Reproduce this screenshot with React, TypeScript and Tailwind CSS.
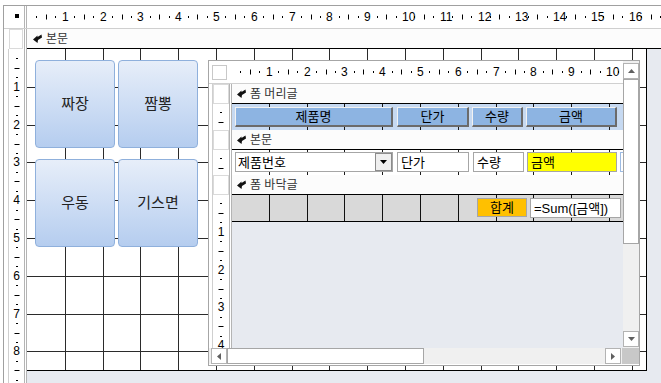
import React from "react";

// Access form design view: outer form with 4 menu buttons and an embedded subform.

const CM = 37.8;
const Q = CM / 4;

function HRuler({ origin, limit }: { origin: number; limit: number }) {
  const marks: React.ReactNode[] = [];
  for (let i = 1; origin + i * Q < limit; i++) {
    const x = Math.round(origin + i * Q);
    if (i % 4 === 0) {
      marks.push(
        <span key={i} className="absolute top-1/2 -translate-y-1/2 text-[12px] leading-none text-black" style={{ left: x - 3 }}>
          {i / 4}
        </span>
      );
    } else {
      marks.push(
        <span
          key={i}
          className={`absolute top-1/2 -translate-y-1/2 w-px bg-black ${i % 2 === 0 ? "h-[5px]" : "h-[2px]"}`}
          style={{ left: x }}
        />
      );
    }
  }
  return <div className="relative h-full flex-1 overflow-hidden bg-white">{marks}</div>;
}

function VRuler({ origin, limit }: { origin: number; limit: number }) {
  const marks: React.ReactNode[] = [];
  for (let i = 1; origin + i * Q < limit; i++) {
    const y = Math.round(origin + i * Q);
    if (i % 4 === 0) {
      marks.push(
        <span key={i} className="absolute left-1/2 -translate-x-1/2 -translate-y-1/2 text-[12px] leading-none text-black" style={{ top: y }}>
          {i / 4}
        </span>
      );
    } else {
      marks.push(
        <span
          key={i}
          className={`absolute left-1/2 -translate-x-1/2 h-px bg-black ${i % 2 === 0 ? "w-[5px]" : "w-[2px]"}`}
          style={{ top: y }}
        />
      );
    }
  }
  return <div className="absolute inset-0 overflow-hidden">{marks}</div>;
}

function Grid({ w, h, ox = 0, color = "#2b2b2b", rows = true }: { w: number; h: number; ox?: number; color?: string; rows?: boolean }) {
  const xs: number[] = [];
  const ys: number[] = [];
  for (let n = 1; Math.round(n * CM) + ox < w; n++) xs.push(Math.round(n * CM) + ox);
  if (rows) for (let n = 1; Math.round(n * CM) < h; n++) ys.push(Math.round(n * CM));
  return (
    <svg className="absolute left-0 top-0" width={w} height={h}>
      {xs.map((x) => (
        <rect key={"x" + x} x={x} y={0} width={1} height={h} fill={color} />
      ))}
      {ys.map((y) => (
        <rect key={"y" + y} x={0} y={y} width={w} height={1} fill={color} />
      ))}
    </svg>
  );
}

function SecIcon() {
  return (
    <svg width="9" height="9" viewBox="0 0 9 9" className="shrink-0">
      <path d="M0 5.5 L4.5 1.5 L4.5 3 L8.5 0.5 L9 3.5 L5 6 L4.5 9 Z" fill="#111" />
    </svg>
  );
}

function SectionBar({ label, className = "" }: { label: string; className?: string }) {
  return (
    <div className={`flex items-center gap-[4px] h-[20px] shrink-0 border-b border-black bg-[#fcfcfc] text-[12px] leading-none text-[#333] ${className}`}>
      <SecIcon />
      <span>{label}</span>
    </div>
  );
}

function MenuButton({ label, className }: { label: string; className: string }) {
  return (
    <div
      className={`absolute w-[80px] h-[88px] rounded-[4px] border border-[#8fb0dc] bg-linear-to-b from-[#e7eef9] to-[#b5cdef] flex items-center justify-center text-[15px] text-[#222] ${className}`}
    >
      {label}
    </div>
  );
}

function HeadLabel({ text, className }: { text: string; className: string }) {
  return (
    <div
      className={`absolute top-[3px] h-[20px] flex items-center justify-center bg-[#8db4e2] border-t border-l border-t-[#f2f2f2] border-l-[#f2f2f2] border-r-2 border-b-2 border-r-[#6b6b6b] border-b-[#6b6b6b] text-[13px] leading-none text-black ${className}`}
    >
      {text}
    </div>
  );
}

function TextBox({ text, className }: { text: string; className: string }) {
  return (
    <div className={`absolute h-[20px] flex items-center pl-[3px] border border-[#a6a6a6] text-[13px] leading-none text-black ${className}`}>
      {text}
    </div>
  );
}

function Tri({ dir }: { dir: "up" | "down" | "left" | "right" }) {
  const pts = {
    up: "0,4 7,4 3.5,0",
    down: "0,0 7,0 3.5,4",
    left: "4,0 4,7 0,3.5",
    right: "0,0 0,7 4,3.5",
  }[dir];
  const vert = dir === "up" || dir === "down";
  return (
    <svg width={vert ? 7 : 4} height={vert ? 4 : 7}>
      <polygon points={pts} fill="#606060" />
    </svg>
  );
}

function ArrowBox({ dir }: { dir: "up" | "down" | "left" | "right" }) {
  return (
    <div className="w-[16px] h-[16px] shrink-0 border border-[#b3b3b3] bg-white flex items-center justify-center">
      <Tri dir={dir} />
    </div>
  );
}

function Subform() {
  return (
    <div className="absolute left-[181px] top-[11px] w-[432px] h-[306px] border border-[#a6a6a6] bg-white flex flex-col">
      <div className="flex h-[287px] shrink-0">
        {/* design area */}
        <div className="w-[414px] shrink-0 flex flex-col">
          <div className="flex h-[23px] shrink-0 border-b border-[#d0d0d0]">
            <div className="ml-[3px] mt-[4px] w-[15px] h-[15px] border border-[#c8c8c8]" />
            <div className="ml-[2px] flex-1 flex">
              <HRuler origin={2} limit={400} />
            </div>
          </div>
          <div className="flex flex-1 min-h-0">
            {/* vertical ruler */}
            <div className="w-[23px] shrink-0 pl-[3px] flex flex-col">
              <div className="flex-1 flex flex-col border-l border-l-[#cfcfcf] border-r-[3px] border-double border-r-[#b4b4b4]">
                <div className="h-[20px] shrink-0 border border-[#dadada]" />
                <div className="relative h-[26px] shrink-0">
                  <VRuler origin={-1} limit={26} />
                </div>
                <div className="h-[20px] shrink-0 border border-[#dadada]" />
                <div className="relative h-[25px] shrink-0">
                  <VRuler origin={-1} limit={25} />
                </div>
                <div className="h-[20px] shrink-0 border border-[#dadada]" />
                <div className="relative flex-1">
                  <VRuler origin={-1} limit={160} />
                </div>
              </div>
            </div>
            {/* sections */}
            <div className="flex-1 min-w-0 flex flex-col overflow-hidden">
              <SectionBar label="폼 머리글" className="pl-[5px]" />
              <div className="relative h-[26px] shrink-0 bg-[#c6d9f1] overflow-hidden">
                <Grid w={391} h={26} ox={-1} color="#1a1a1a" />
                <HeadLabel text="제품명" className="left-[3px] w-[158px]" />
                <HeadLabel text="단가" className="left-[165px] w-[72px]" />
                <HeadLabel text="수량" className="left-[240px] w-[51px]" />
                <HeadLabel text="금액" className="left-[294px] w-[91px]" />
              </div>
              <SectionBar label="본문" className="pl-[5px]" />
              <div className="relative h-[25px] shrink-0 bg-white overflow-hidden">
                <Grid w={391} h={25} ox={-1} color="#1a1a1a" />
                <div className="absolute left-[3px] top-[2px] w-[158px] h-[20px] border border-[#a6a6a6] bg-white flex items-center pl-[2px] text-[13px] leading-none">
                  제품번호
                  <div className="absolute right-0 top-0 bottom-0 w-[17px] border border-[#8c8c8c] bg-[#efefef] flex items-center justify-center">
                    <svg width="7" height="4">
                      <polygon points="0,0 7,0 3.5,4" fill="#000" />
                    </svg>
                  </div>
                </div>
                <TextBox text="단가" className="top-[2px] left-[165px] w-[72px] bg-white" />
                <TextBox text="수량" className="top-[2px] left-[241px] w-[51px] bg-white" />
                <TextBox text="금액" className="top-[2px] left-[295px] w-[90px] bg-[#ffff00]" />
                <div className="absolute left-[388px] top-[2px] w-[10px] h-[20px] border border-[#9dbbe3] bg-white" />
              </div>
              <SectionBar label="폼 바닥글" className="pl-[5px]" />
              <div className="relative h-[27px] shrink-0 bg-[#d9d9d9] border-b border-black overflow-hidden">
                <Grid w={391} h={26} ox={-1} color="#111" />
                <div className="absolute left-[245px] top-[3px] w-[50px] h-[19px] border border-[#a6a6a6] bg-[#ffc000] flex items-center justify-center text-[13px] leading-none">
                  합계
                </div>
                <TextBox text="=Sum([금액])" className="top-[3px] left-[298px] w-[91px] h-[19px] bg-white" />
              </div>
              <div className="flex-1 bg-[#e7eaf0]" />
            </div>
          </div>
        </div>
        {/* vertical scrollbar */}
        <div className="flex-1 flex flex-col bg-[#f0f0f0] pt-[2px] pb-px">
          <ArrowBox dir="up" />
          <div className="h-[165px] shrink-0 border border-[#a6a6a6] bg-white" />
          <div className="flex-1" />
          <ArrowBox dir="down" />
        </div>
      </div>
      {/* horizontal scrollbar */}
      <div className="flex h-[16px] shrink-0">
        <div className="w-[413px] shrink-0 flex bg-[#f0f0f0] pl-[2px] pr-px">
          <ArrowBox dir="left" />
          <div className="w-[197px] shrink-0 border border-[#a6a6a6] bg-white" />
          <div className="flex-1" />
          <ArrowBox dir="right" />
        </div>
        <div className="flex-1 bg-[#c8c8c8]" />
      </div>
    </div>
  );
}

export default function App() {
  return (
    <div className="w-[661px] h-[383px] overflow-hidden bg-white pl-[3px] pt-[5px] flex font-['Liberation_Sans','Noto_Sans_CJK_KR',sans-serif] text-black">
      <div className="flex-1 min-w-0 flex flex-col border-l border-t border-[#a0a0a0]">
        {/* top ruler */}
        <div className="flex h-[23px] shrink-0 border-b border-b-[#cfcfcf]">
          <div className="w-[23px] shrink-0 border-r-[3px] border-double border-r-[#b4b4b4]">
            <div className="ml-[11px] mt-[8px] w-[4px] h-[4px] bg-black" />
          </div>
          <HRuler origin={0} limit={640} />
        </div>

        {/* section bar */}
        <div className="flex h-[20px] shrink-0">
          <div className="w-[23px] shrink-0 border-r-[3px] border-double border-r-[#b4b4b4] pl-[5px] pr-px">
            <div className="h-full border border-[#dadada]" />
          </div>
          <SectionBar label="본문" className="flex-1 pl-[6px]" />
        </div>

        {/* design surface */}
        <div className="flex flex-1 min-h-0">
          <div className="w-[23px] shrink-0 border-r-[3px] border-double border-r-[#b4b4b4] pl-[4px] flex">
            <div className="relative flex-1 border-l border-[#cfcfcf]">
              <VRuler origin={0} limit={340} />
            </div>
          </div>
          <div className="flex-1 bg-[#e7eaf0]">
            <div className="relative w-[620px] h-[322px] bg-white border-r border-b border-black">
              <Grid w={619} h={321} />
              <MenuButton label="짜장" className="left-[8px] top-[11px]" />
              <MenuButton label="짬뽕" className="left-[91px] top-[11px]" />
              <MenuButton label="우동" className="left-[8px] top-[110px]" />
              <MenuButton label="기스면" className="left-[91px] top-[110px]" />
              <Subform />
            </div>
          </div>
        </div>
      </div>
    </div>
  );
}
